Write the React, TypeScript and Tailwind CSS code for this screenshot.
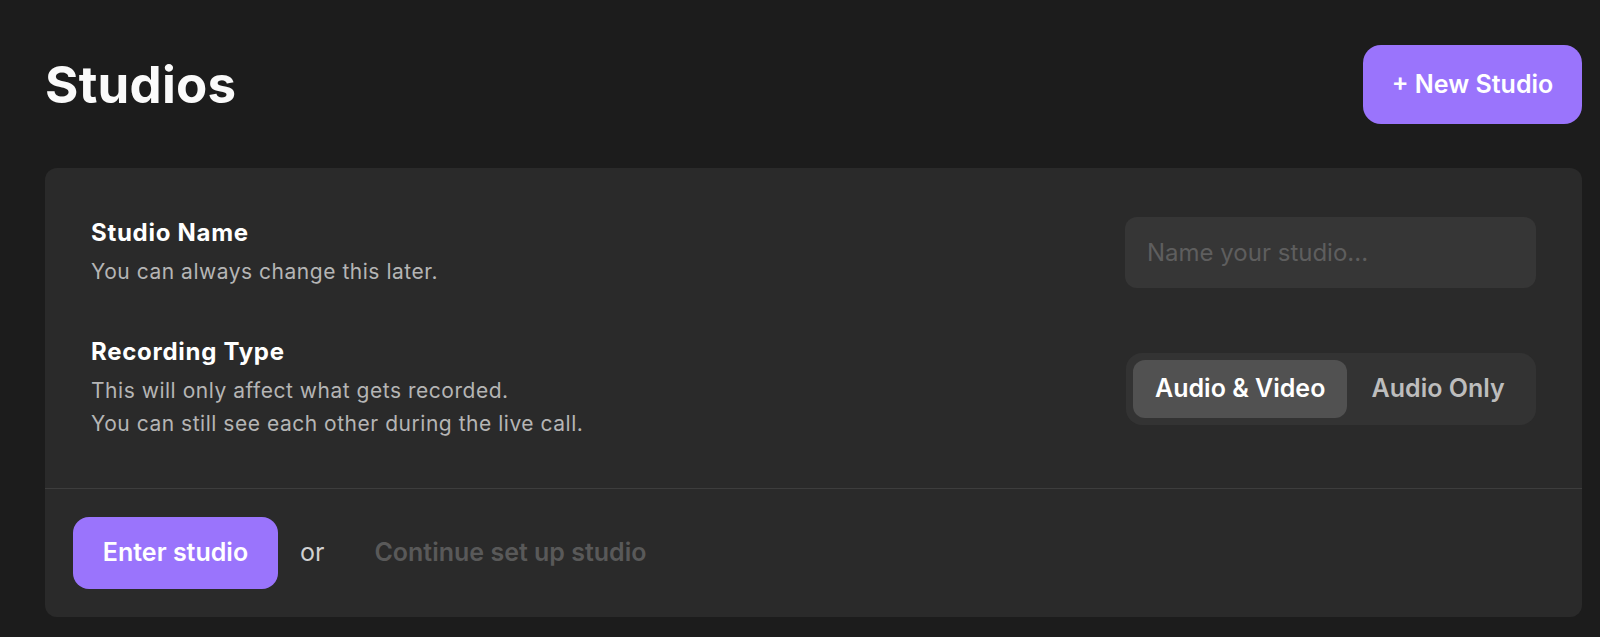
export default function App() {
  return (
    <div className="min-h-[637px] bg-[#1c1c1c] pl-[45px] pr-[18px] pt-[45px] font-['Inter',sans-serif] text-white">
      {/* Header */}
      <div className="flex items-center justify-between">
        <h1 className="text-[51px] leading-[60px] font-bold tracking-[0.005em] text-[#fafafa]">Studios</h1>
        <button className="h-[79px] w-[219px] rounded-[18px] bg-[#9a74fc] text-[25px] font-semibold text-white">
          + New Studio
        </button>
      </div>

      {/* Card */}
      <div className="mt-[44px] rounded-[12px] bg-[#2a2a2a]">
        <div className="px-[46px] pt-[49px] pb-[48px]">
          <div className="flex items-center justify-between">
            <div>
              <div className="text-[24px] leading-[30px] font-bold tracking-[0.03em]">Studio Name</div>
              <div className="mt-[7px] text-[21px] leading-[33px] tracking-[0.025em] text-[#b5b5b5]">
                You can always change this later.
              </div>
            </div>
            <input
              placeholder="Name your studio..."
              className="h-[71px] w-[411px] rounded-[12px] bg-[#363636] px-[22px] text-[24px] text-white outline-none placeholder:text-[#5e5e5e]"
            />
          </div>

          <div className="mt-[49px] flex items-center justify-between">
            <div>
              <div className="text-[24px] leading-[30px] font-bold tracking-[0.03em]">Recording Type</div>
              <div className="mt-[7px] text-[21px] leading-[33px] tracking-[0.025em] text-[#b5b5b5]">
                <p>This will only affect what gets recorded.</p>
                <p>You can still see each other during the live call.</p>
              </div>
            </div>
            <div className="flex h-[72px] w-[410px] items-center rounded-[16px] bg-[#333333] p-[7px]">
              <button className="h-[58px] rounded-[12px] bg-[#515151] px-[22px] text-[25px] font-semibold text-white">
                Audio &amp; Video
              </button>
              <button className="h-[58px] flex-1 rounded-[12px] px-[20px] text-[25px] font-semibold text-[#bdbdbd]">
                Audio Only
              </button>
            </div>
          </div>
        </div>

        <div className="h-px bg-[#3d3d3d]" />

        <div className="flex items-center px-[28px] pt-[28px] pb-[28px]">
          <button className="h-[72px] w-[205px] rounded-[16px] bg-[#9a74fc] text-[25px] font-semibold text-white">
            Enter studio
          </button>
          <span className="ml-[22px] text-[25px] text-[#d0d0d0]">or</span>
          <button className="ml-[50px] text-[25px] font-semibold text-[#595959]">
            Continue set up studio
          </button>
        </div>
      </div>
    </div>
  );
}
